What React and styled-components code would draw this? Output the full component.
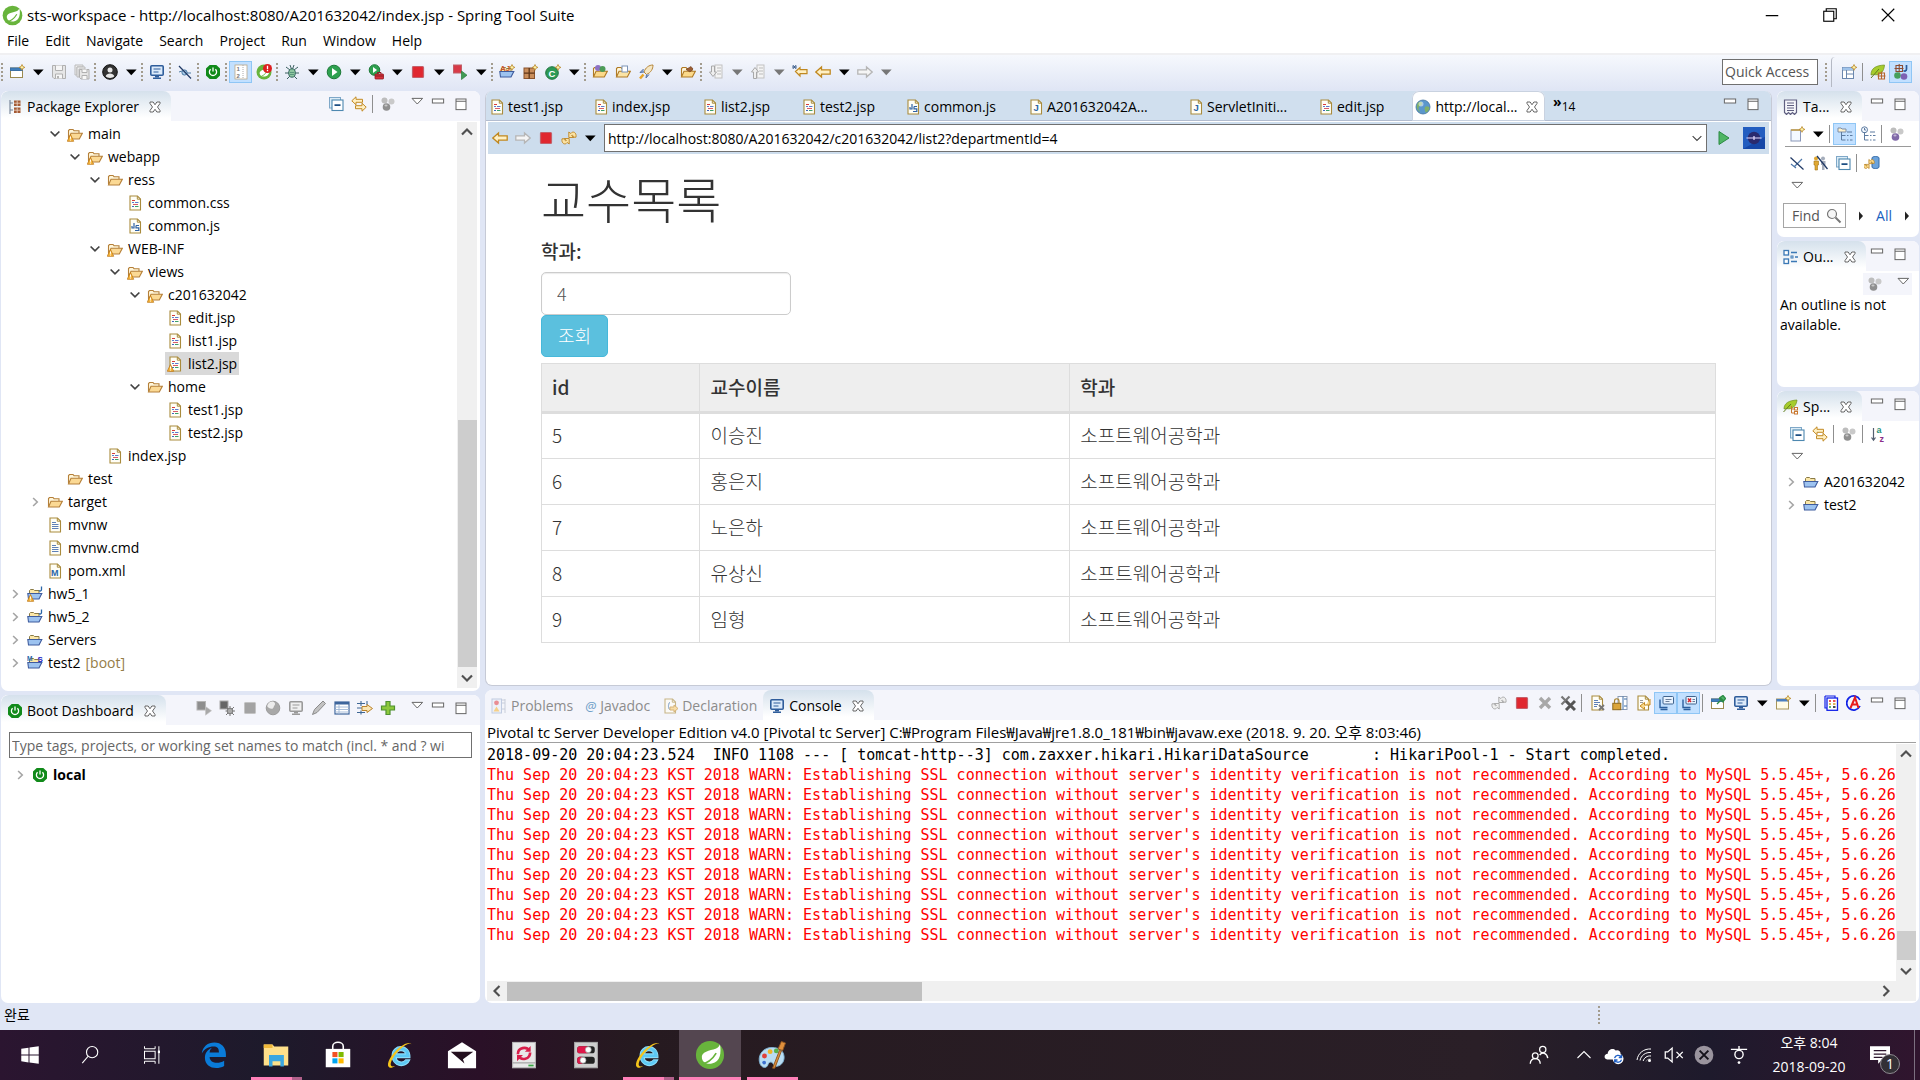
import React from "react";
import styled, { createGlobalStyle, css } from "styled-components";

const uiFont = `"Open Sans", "Noto Sans CJK KR", sans-serif`;
const webFont = `"Noto Sans CJK KR", sans-serif`;
const monoFont = `"DejaVu Sans Mono", "Noto Sans CJK KR", monospace`;

const GlobalStyle = createGlobalStyle`
  * { box-sizing: border-box; }
  body { margin: 0; background: #e0e6f5; font: 14px/20px ${uiFont}; color: #000; overflow: hidden; }
  button, input { font: inherit; color: inherit; margin: 0; padding: 0; border: 0; background: none; border-radius: 0; }
  button { cursor: default; }
  ul { list-style: none; margin: 0; padding: 0; }
  svg { display: block; flex: none; }
`;

/* ---------- drawings ---------- */

const star = <path d="M13 0.5l.9 2 2 .9-2 .9-.9 2-.9-2-2-.9 2-.9z" fill="#fff3a8" stroke="#b8862b" strokeWidth=".8" />;
const doc = (
  <>
    <path d="M3 1h7.5L13.500 4v11H3z" fill="#fffef6" stroke="#a98b3d" strokeWidth="1.1" />
    <path d="M10.300 1v3.200h3" fill="none" stroke="#a98b3d" />
  </>
);
const openFolder = (a, b) => (
  <>
    <path d="M1.500 12.500V4.500l1-1h3.500l1 1.200h5v2.500" fill="#fff6da" stroke={a} strokeWidth="1.100" />
    <path d="M1.500 13L4 7.300h11.300L12.300 13z" fill={b} stroke={a} strokeWidth="1.100" />
  </>
);
const warn = (
  <>
    <path d="M3.500 8.500L6.700 15.300H.3z" fill="#f8b83c" stroke="#c07a1c" strokeWidth=".8" />
    <path d="M3.500 10.500v2.300M3.500 13.600v.9" stroke="#fff" strokeWidth="1" />
  </>
);
const project = (
  <>
    <path d="M2.500 12V4.500l1-1h3l1 1h4.500v3" fill="#fbe7a8" stroke="#8a7b45" />
    <path d="M1.500 13L.8 7.500h14L12 13z" fill="#9dc3f0" stroke="#3f5c9e" strokeWidth="1.100" />
  </>
);
const balls = (c) => (
  <>
    <circle cx="4.500" cy="4.500" r="3" fill="#bdbdbd" />
    <circle cx="11.500" cy="5.500" r="3" fill="#c9c9c9" />
    <circle cx="6.500" cy="11" r="3.800" fill={c} />
    <ellipse cx="6" cy="9.500" rx="1.600" ry="1" fill="#fff" opacity=".5" />
  </>
);
const monitor = (c, f) => (
  <>
    <rect x="1.800" y="1.800" width="12.400" height="9.400" rx="1" fill={f} stroke={c} strokeWidth="1.600" />
    <path d="M4.500 5h7M4.500 8h5" stroke={c} />
    <path d="M6 12.500h4M4 14.300h8" stroke={c} strokeWidth="1.500" />
  </>
);
const power = (
  <>
    <path d="M4.700 1h6.600L15 4.500v7L11.300 15H4.700L1 11.500v-7z" fill="#118a1a" />
    <path d="M5.600 5.200a3.600 3.600 0 1 0 4.800 0M8 3.600v4" fill="none" stroke="#fff" strokeWidth="1.300" />
  </>
);
const leafBall = (
  <>
    <circle cx="8" cy="8" r="7.500" fill="#68b43c" />
    <path d="M13.300 2.300c.8 4.500.3 9.500-4.300 10.200-2.500.4-4.700-.3-5.300-2.700C3 6.300 8 5.600 11 4.700c1.200-.4 1.900-1.300 2.300-2.400z" fill="#fff" />
    <path d="M3 13c3.500-.5 6.500-3 8.300-6" fill="none" stroke="#68b43c" strokeWidth=".9" />
  </>
);
const arrowL = (c, f) => <path d="M.8 8L6.500 3v2.800h8.700v4.400H6.500V13z" fill={f} stroke={c} strokeWidth="1.300" />;
const arrowR = (c, f) => <path d="M15.200 8L9.500 3v2.800H.8v4.400h8.700V13z" fill={f} stroke={c} strokeWidth="1.300" />;
const syncArrows = (c, f) => (
  <>
    <path d="M.8 4.800l4.200-4v2.500h6.500v3H5v2.500z" fill={f} stroke={c} />
    <path d="M15.200 11.200l-4.200-4v2.500H4.500v3H11v2.500z" fill={f} stroke={c} />
  </>
);
const stopRed = <rect x="2.500" y="2.500" width="11" height="11" rx="1" fill="#e0272f" stroke="#c4606a" strokeWidth="1.200" />;
const refresh = (c, f) => (
  <>
    <path d="M7.800 7.500V2l2 1.500C12 .5 15.800 2.500 15 7.200h-2.800c.3-1.600-.6-2.300-1.600-1.700l2 2z" fill={f} stroke={c} strokeWidth=".9" />
    <path d="M8.200 8.500V14l-2-1.500C4 15.500.2 13.500 1 8.800h2.800c-.3 1.600.6 2.300 1.600 1.700l-2-2z" fill={f} stroke={c} strokeWidth=".9" />
  </>
);
const codeDoc = (
  <>
    {doc}
    <path d="M5 5.500h3" stroke="#d63c3c" />
    <path d="M5 7.500h2M8 7.500h3.500" stroke="#5b7bd0" />
    <path d="M6 9.500h5" stroke="#d65c6c" />
    <path d="M5 11.500h2" stroke="#3f66c0" /><path d="M8 11.500h3.500" stroke="#3ba06a" />
  </>
);
const jsDoc = (
  <>
    {doc}
    <path d="M7 5v5H5V8M9 7.500h3M9 7.500v2.300h2.800v2.700H8" fill="none" stroke="#2f62a5" strokeWidth="1.200" />
  </>
);
const collapse = (
  <>
    <rect x="1.500" y="1.500" width="11" height="10.500" fill="#dcecf6" stroke="#7fa8c8" />
    <rect x="4" y="4" width="11" height="10.500" fill="#fff" stroke="#4d88b0" strokeWidth="1.100" />
    <path d="M6.500 9.200h6" stroke="#1c4e82" strokeWidth="1.700" />
  </>
);
const xMark = (c) => <path d="M3 3l10 10M13 3L3 13" stroke={c} strokeWidth="3.400" />;
const letter = (t, x, y, size, fill, extra = {}) => (
  <text x={x} y={y} fontSize={size} fill={fill} fontWeight="700" fontFamily="Liberation Sans, sans-serif" {...extra}>{t}</text>
);
const windowIcon = (
  <>
    <rect x="1.500" y="4" width="12" height="9.500" fill="#fff" stroke="#9b8a50" />
    <rect x="1.500" y="4" width="12" height="2.500" fill="#3f7fbd" stroke="#3c70a5" />
  </>
);
const ie = (
  <>
    <path d="M13.300 9.400H6c.2 2.600 3.600 3 5 1.200h2.200c-1.700 4.700-9.400 4-9.400-2.300C3.800 2 13.500 1.600 13.300 9.400zM6.100 7.400h4.800c-.3-2.300-4.400-2.400-4.800 0z" fill="#5cc9f5" stroke="#8adcf9" strokeWidth=".6" />
    <path d="M14.200 3.200C14.500.2 10 1.500 6 5.500 2 9.600.4 14 2.600 14.800c.8.200 1.800-.2 2.800-.9-1.600.5-2.700.2-2.300-1.600.6-3 5.500-8.800 8.800-10.100 1.600-.6 2.300-.2 2.300 1z" fill="#f6c51b" />
  </>
);
const sash = (
  <>
    <path d="M2 9l5 4M5 12l6-6 2-2" stroke="#4d76a8" fill="none" strokeWidth="1.200" />
    <path d="M1.500 2.500l13 12" stroke="#1f3864" strokeWidth="1.200" />
  </>
);
const treeLines = (
  <path d="M4.500 6v8h4M4.500 9.500h4M10 6h5M10 9.500h1.500M13 9.500h2.500M10 14h1.500M13 14h2.500" fill="none" stroke="#5d7ba0" />
);

const ICONS = {
  spring: leafBall,
  newWizard: <>{windowIcon}{star}</>,
  save: <><path d="M1.500 1.500h13v13H3l-1.500-1.500z" fill="#e6e6e6" stroke="#b0b0b0" /><path d="M4.500 1.500v5h7v-5M4.500 14.500v-4.500h7v4.500" fill="#f6f6f6" stroke="#b0b0b0" /><path d="M6 12h2v2.500H6z" fill="#b5b5b5" /></>,
  saveAll: <><path d="M1 1h8v2H3v8H1z" fill="#eee" stroke="#bbb" /><path d="M3 3h8v2H5v8H3z" fill="#eee" stroke="#bbb" /><path d="M5.500 5.500h9.500v9.500H7l-1.500-1.500z" fill="#e6e6e6" stroke="#b0b0b0" /><path d="M8 5.500v3h5v-3M8 15v-3.500h5V15" fill="#f8f8f8" stroke="#b0b0b0" /></>,
  user: <><circle cx="8" cy="8" r="7.300" fill="#333" stroke="#111" /><circle cx="8" cy="6" r="2.500" fill="#e8e8e8" /><path d="M3.700 12.200c1-3.700 7.600-3.700 8.600 0-2 2.300-6.600 2.300-8.600 0z" fill="#e8e8e8" /></>,
  monitor: monitor("#2f5d9b", "#dceafa"),
  monitorGray: monitor("#9a9a9a", "#f0f0f0"),
  noLink: <><circle cx="7.500" cy="8.500" r="2.600" fill="#a8cbe8" stroke="#4b7ba5" /><path d="M10 9h4M5 7l-3 1" stroke="#4b7ba5" /><path d="M2 2l12 12.500" stroke="#1f3864" strokeWidth="1.200" /></>,
  power,
  ruler: <><rect x="2" y="1" width="12" height="14" fill="#fff" stroke="#b9a98a" strokeWidth=".8" /><path d="M10 1v14" stroke="#aaa" strokeDasharray="1 1" />{letter("1", 3.500, 7, 6, "#777")}{letter("2", 3.500, 13.500, 6, "#777")}</>,
  springBadge: <>{leafBall}<circle cx="11.500" cy="4.500" r="4.500" fill="#dd1f1f" /><path d="M11.500 1.800v3.400M11.500 6v1.200" stroke="#fff" strokeWidth="1.300" /></>,
  bug: <><path d="M2 3l4 3M14 3l-4 3M1 9h4M15 9h-4M3 15l3-3M13 15l-3-3M6 1l1.500 4M10 1L8.500 5" stroke="#3a5f5f" fill="none" /><ellipse cx="8" cy="9" rx="3.300" ry="4.200" fill="#8fc7a0" stroke="#33665f" /><path d="M6 8.500h4M6 10.500h4" stroke="#4c8a74" strokeWidth=".8" /></>,
  run: <><circle cx="8" cy="8" r="6.800" fill="#2ea04f" stroke="#1d7a38" /><path d="M6 4l5.500 4L6 12z" fill="#fff" /></>,
  runExt: <><circle cx="6.500" cy="6" r="5.300" fill="#2ea04f" stroke="#1d7a38" /><path d="M5 3l4 3-4 3z" fill="#fff" /><rect x="7" y="10" width="8.500" height="5" rx=".6" fill="#d6303a" stroke="#8f1c24" strokeWidth=".8" /><path d="M9.500 10V8.500h3.500V10M7 12h8.500" fill="none" stroke="#8f1c24" /></>,
  stop: stopRed,
  stopRun: <><rect x="1.500" y="1" width="8" height="8" fill="#d83a48" stroke="#c06068" /><path d="M9.500 7l5.500 4.200-5.500 4.300z" fill="#3f9c55" stroke="#2b7a3e" strokeWidth=".7" /></>,
  aj: <>{project}{letter("AJ", 1, 7, 8, "#c7562f")}{star}</>,
  pkg: <><rect x="2" y="4" width="10.500" height="10.500" fill="#c98d5b" stroke="#8a532c" /><path d="M7.200 4v10.500M2 9.200h10.500" stroke="#5e3518" strokeWidth="1.300" />{star}</>,
  classNew: <><circle cx="7" cy="9" r="6.300" fill="#2d9a56" stroke="#20743f" />{letter("C", 3.500, 12.500, 9.500, "#fff")}{star}</>,
  folderBalls: <>{openFolder("#b07a25", "#fbd98a")}<circle cx="6" cy="4" r="3" fill="#8d72c5" /><circle cx="10.500" cy="5" r="3" fill="#4c9b58" /></>,
  folderDoc: <>{openFolder("#b07a25", "#fbe3a4")}<rect x="7" y="2" width="5.500" height="6" fill="#fff" stroke="#7c93b6" /></>,
  rocket: <><path d="M15 1C11 1 7.500 3.500 6 8l2.500 2.500C13 8.500 15 5 15 1z" fill="#f4e6c4" stroke="#b5853a" /><path d="M6 8L2 8.500 5.500 5M8.500 10.500L8 14l3-3.500" fill="#8ba4cf" stroke="#5b76a5" /><path d="M5.500 10.500L2 14.500" stroke="#e8a528" strokeWidth="2.500" /></>,
  folderPen: <>{openFolder("#b07a25", "#fbd98a")}<path d="M6 5.500l5-3 2 2.500-3 3z" fill="#9b5d34" stroke="#6e3c1c" strokeWidth=".6" /></>,
  nextAnn: <><rect x="7" y="1" width="7" height="13" fill="#f4f4f4" stroke="#c2c2c2" /><path d="M9 4h4M9 7h4M9 10h4" stroke="#bbb" /><path d="M3.500 2h3v6h2L5 12.500 1.500 8h2z" fill="#efefef" stroke="#a8a8a8" /></>,
  prevAnn: <><rect x="7" y="1" width="7" height="13" fill="#f4f4f4" stroke="#c2c2c2" /><path d="M9 4h4M9 7h4M9 10h4" stroke="#bbb" /><path d="M3.500 14.500h3V8h2L5 3.500 1.500 8h2z" fill="#efefef" stroke="#a8a8a8" /></>,
  lastEdit: <><path d="M3.500 7.500l4.500-4v2.200h7v4H8v2.300z" fill="#fff0c4" stroke="#c08820" strokeWidth="1.200" /><path d="M0 3h5M.8 1l3.400 4M4.200 1L.8 5" stroke="#2b4f80" strokeWidth=".9" /></>,
  back: arrowL("#c08820", "#fff0c4"),
  forward: arrowR("#b5b5b5", "#f5f5f5"),
  perspective: <><rect x="1.500" y="3.500" width="11" height="11" fill="#fff" stroke="#6b87ae" /><path d="M1.500 6h11M5.500 6v8.500M5.500 10h7" stroke="#6b87ae" /><rect x="1.500" y="3.500" width="11" height="2.500" fill="#9fc3ea" />{star}</>,
  springPersp: <><path d="M1 11C1 4 6 1.500 14.500 1 14 8 10 12 3.500 10.500z" fill="#a6cc2c" stroke="#6f8f1f" strokeWidth=".7" /><path d="M1 14L9 5" stroke="#5f7d1a" /><path d="M8.500 9h6v6h-6zM11.500 7.500V15M7.500 12h8" fill="none" stroke="#b5672f" strokeWidth="1.100" /></>,
  javaPersp: <><path d="M3 1.500h6.500v6H3zM6.200 0v8.500M1.500 4.500h9" fill="none" stroke="#8d4d33" strokeWidth="1.100" /><path d="M13.500 1v4c0 2-2 2.500-3 1.500" fill="none" stroke="#2a5c9c" strokeWidth="1.700" /><circle cx="4.500" cy="11.500" r="3.300" fill="#46a05d" /><circle cx="11" cy="12.500" r="3.300" fill="#7d62b3" /></>,
  pkgExplorer: <><path d="M3 1v14M3 4h3M3 11h3" fill="none" stroke="#6f7f92" strokeWidth="1.100" /><rect x="7" y="1.500" width="6.500" height="5.500" fill="#a35a35" /><rect x="7" y="8.500" width="6.500" height="5.500" fill="#a35a35" /><path d="M10.200 1.500V7M7 4.200h6.500M10.200 8.500V14M7 11.200h6.500" stroke="#f0d9c9" strokeWidth=".8" /></>,
  collapse,
  link: syncArrows("#c28a25", "#fff0c4"),
  balls: balls("#8f8f8f"),
  ballsPurple: balls("#8069a8"),
  folder: openFolder("#b5803a", "#fbd994"),
  folderWarn: <>{openFolder("#b5803a", "#fbd994")}{warn}</>,
  jsp: codeDoc,
  jspWarn: <>{codeDoc}{warn}</>,
  js: jsDoc,
  java: <>{doc}{letter("J", 5.500, 12, 9.500, "#2a66a8")}</>,
  text: <>{doc}<path d="M5 5.500h4M5 7.500h6.500M5 9.500h6.500M5 11.500h6.500" stroke="#5e80b8" /></>,
  maven: <>{doc}{letter("M", 4, 13, 9, "#2a66a8")}</>,
  projJWarn: <>{project}<path d="M14.500.5v3c0 1.500-1.500 2-2.500 1" fill="none" stroke="#2a66a8" strokeWidth="1.300" />{warn}</>,
  projJ: <>{project}<path d="M14.500.5v3c0 1.500-1.500 2-2.500 1" fill="none" stroke="#2a66a8" strokeWidth="1.300" /></>,
  proj: project,
  projMS: <>{project}{letter("M", 0, 5.500, 6.500, "#2a66a8")}{letter("S", 10.500, 6.500, 8, "#2222c4")}</>,
  startGray: <><rect x="1" y="1.500" width="8.500" height="8.500" fill="#8e8e8e" stroke="#b5b5b5" /><path d="M9.500 6.500l6 4.200-6 4.500z" fill="#a8a8a8" stroke="#c5c5c5" strokeWidth=".6" /></>,
  debugGray: <><rect x="1" y="1" width="8" height="8" fill="#666" stroke="#aaa" /><circle cx="11" cy="11" r="2.800" fill="#aaa" stroke="#777" /><path d="M7 7l2 2M15 7l-2 2M7 15l2-2M15 15l-2-2M11 6v2M6.500 11h1.500M14 11h2M11 14v2" stroke="#777" /></>,
  stopGray: <rect x="2.500" y="2.500" width="11" height="11" rx=".8" fill="#a3a3a3" stroke="#c3c3c3" />,
  globeGray: <><circle cx="8" cy="8" r="6.800" fill="#a8a8a8" stroke="#9b9b9b" /><path d="M2.500 5C4 1.500 8 .8 9.500 2.500c1.500 2-.5 3-1 5-.5 1.800-3 1.500-4.500.5S2 6.500 2.500 5z" fill="#ececec" /></>,
  pencil: <path d="M1.500 14.500l2-5L12 1l2.500 2.500-8.500 9z" fill="#c2c2c2" stroke="#8a8a8a" />,
  props: <><rect x="1" y="2" width="14" height="12" fill="#fff" stroke="#3d659c" strokeWidth="1.200" /><path d="M1 3.300h14" stroke="#3d659c" strokeWidth="2.500" /><path d="M5 4v10M1 7h14M1 9.500h14M1 12h14" stroke="#9fb7d6" strokeWidth=".9" /></>,
  filter: <><path d="M0 3.500h8M0 8h5M0 12.500h8M4 1v5M10 1v4M4 10.500v4" stroke="#3e6795" strokeWidth="1.100" /><path d="M5 6.500h5v-2l5.500 4-5.500 4v-2H5z" fill="#fbe6b4" stroke="#b9822a" /></>,
  plus: <path d="M6 1.500h4V6h4.500v4H10v4.500H6V10H1.500V6H6z" fill="#8cc83c" stroke="#4f9130" strokeWidth="1.200" />,
  problems: <g opacity=".6"><rect x="1" y="1" width="9.500" height="14" fill="#e8eef8" stroke="#9db0d0" /><circle cx="5.500" cy="4.800" r="2.400" fill="#e2484f" /><path d="M5.500 8.500l3 5h-6z" fill="#f6b73c" /><path d="M11 2h3M11 5h3M11 11h3M14 1v14" stroke="#aab4c6" /></g>,
  declaration: <g opacity=".6">{doc}<path d="M8 4.500c-2 0-.5 3-2 3.500 1.500.5 0 3.500 2 3.500" fill="none" stroke="#3468a5" /><path d="M8 9h4V7l4 3.500L12 14v-2H8z" fill="#f8cc70" stroke="#c28a25" /></g>,
  xGray: xMark("#a8a8a8"),
  xxGray: <><path d="M1.500 1.500l8 8M9.500 1.500l-8 8" stroke="#777" strokeWidth="2.200" /><path d="M6 6l9 9M15 6l-9 9" stroke="#555" strokeWidth="3" /></>,
  clearDoc: <>{doc}<path d="M5 5.500h4M5 7.500h6M5 9.500h4M5 11.500h3" stroke="#5e80b8" /><path d="M10 10l5 5M15 10l-5 5" stroke="#777" strokeWidth="1.800" /></>,
  lock: <><rect x="6" y="1.500" width="9" height="13" fill="#fff" stroke="#8a9bb4" /><path d="M11 1.500v13M12 4h3M12 11h3" stroke="#3f6fa8" /><path d="M2.500 8.500V6c0-3 4.500-3 4.500 0v2.500" fill="none" stroke="#a88430" strokeWidth="1.200" /><rect x=".8" y="8.300" width="8" height="6.400" fill="#dba53a" stroke="#8f6a1d" /></>,
  wrap: <>{doc}<path d="M5 5.500h3M5 7.500h3" stroke="#999" /><path d="M15 4v6H9.500V7.500L5 11l4.500 3.500V12" fill="#f9d989" stroke="#c28a25" /></>,
  showOut: <><rect x="5" y="1.500" width="10.500" height="7.500" rx="1" fill="#eaf4ff" stroke="#41658f" /><path d="M7.500 4.500h6M7.500 6.500h4" stroke="#6b7f9a" /><path d="M2 4.500v8h7.500M2.500 14.500h7" fill="none" stroke="#2b5f9e" strokeWidth="1.400" /></>,
  showErr: <><rect x="5" y="1.500" width="10.500" height="7.500" rx="1" fill="#eaf4ff" stroke="#41658f" /><path d="M7 3.500l3 3.500M10 3.500L7 7" stroke="#d8202a" strokeWidth="1.500" /><path d="M11.500 4.500h2.500M11.500 6.500h2.500" stroke="#6b7f9a" /><path d="M2 4.500v8h7.500M2.500 14.500h7" fill="none" stroke="#2b5f9e" strokeWidth="1.400" /></>,
  pin: <>{windowIcon}<path d="M7 9l4-4M9 3l4.500 4.500M10 2.500l3-2 2.500 3-2 2.500z" stroke="#2c8b45" fill="#4fb468" strokeWidth="1.300" /></>,
  newConsole: <><rect x="1.500" y="4" width="12" height="10" fill="#fffbe6" stroke="#a8965a" /><rect x="1.500" y="4" width="12" height="2.500" fill="#4a7fc0" />{star}</>,
  grid: <><path d="M2 1h10v2M4 13H2V1" fill="none" stroke="#1020e8" strokeWidth="1.200" /><rect x="4" y="3" width="10.500" height="12.300" fill="#fff" stroke="#1020e8" strokeWidth="1.300" /><path d="M6 6h2M10 6h2.500" stroke="#e02020" strokeWidth="1.300" /><path d="M6 9h2M10 9h2.500" stroke="#d8a020" strokeWidth="1.300" /><path d="M6 12h2" stroke="#20a040" strokeWidth="1.300" /><path d="M10 12h2.500" stroke="#111" strokeWidth="1.300" /></>,
  anyEdit: <><path d="M14 5A7 7 0 1 0 14 11" fill="none" stroke="#1224e6" strokeWidth="1.700" /><path d="M4.500 13L9 2.500 12.500 13M6 9.500h6" fill="none" stroke="#e81c1c" strokeWidth="2" /></>,
  refreshGold: refresh("#bd8422", "#fbe3a4"),
  refreshGray: refresh("#a5a5a5", "#eee"),
  play: <path d="M3 1.500l10 6.500L3 14.500z" fill="#4fb565" stroke="#2b8a42" />,
  browser: <><circle cx="8" cy="8" r="7" fill="#5b97cc" stroke="#41729f" strokeWidth=".8" /><path d="M3 3.500c3-2 5 0 4 2s-3 1-3.500 3.500c-.3 1.500 1.500 2.500 1.500 4C1.500 11 1 6.500 3 3.500zM10 8c2-1.500 4-.5 4.500 1-.5 2.500-2.500 4.500-4 4.500-.5-2-1.500-4-.5-5.500z" fill="#7fb069" /><circle cx="6" cy="5" r="2.500" fill="#fff" opacity=".5" /></>,
  tasks: <><path d="M1.500 1h12v12.500l-2 2-2-2-2 2-2-2-2 2-2-2z" fill="#f5f6fa" stroke="#5f5f80" strokeWidth="1.200" /><path d="M4 4h7M4 6.500h7M4 9h7M4 11.500h7" stroke="#5f5f80" /></>,
  newTask: <><rect x="2" y="4" width="9.500" height="11" fill="#f4f9ff" stroke="#8a97b8" /><path d="M2 4h9.500" stroke="#c29a40" strokeWidth="1.300" />{star}</>,
  categorized: <><path d="M1 2h3l1 1h4v3H1z" fill="#fff2cc" stroke="#7e8da5" />{treeLines}</>,
  scheduled: <><circle cx="4.500" cy="3.800" r="3" fill="#f4f9ff" stroke="#5d7ba0" /><path d="M4.500 2v2h1.500" stroke="#5d7ba0" fill="none" />{treeLines}</>,
  unsub: sash,
  people: <><circle cx="4" cy="3.500" r="2" fill="#e0a832" /><path d="M2 6h4.500v4H5.500v5H3v-5H2z" fill="#e0a832" stroke="#a57618" strokeWidth=".6" /><circle cx="11" cy="3.500" r="2" fill="#a5adbb" /><path d="M9 6h4.500v4h-1v5H10v-5H9z" fill="#a5adbb" /><path d="M5 1l10.500 13" stroke="#1f3864" strokeWidth="1.300" /></>,
  syncRepo: <><path d="M8 3c0-2 7-2 7 0v9c0 2-7 2-7 0z" fill="#6ba3dc" stroke="#346ba8" /><g transform="translate(-1 3) scale(.75)">{refresh("#b07a1c", "#fbd98a")}</g></>,
  outline: <><rect x="1" y="1.500" width="4.500" height="4.500" fill="#fff" stroke="#3a78b5" strokeWidth="1.300" /><rect x="1" y="10" width="4.500" height="4.500" fill="#fff" stroke="#3a78b5" strokeWidth="1.300" /><path d="M8 3.500h6M12 8h3M8 12.500h6" stroke="#3a78b5" strokeWidth="1.300" /><rect x="8" y="7" width="2" height="2" fill="#fff" stroke="#3a78b5" /></>,
  springExplorer: <><path d="M1 10C1 4 6 1.500 14 1 13.500 7 9 11 3.500 9.500z" fill="#a6cc2c" stroke="#6f8f1f" strokeWidth=".7" /><path d="M.5 13L8 5" stroke="#5f7d1a" /><path d="M8.500 7v7h3M8.500 10h3" fill="none" stroke="#c8772f" /><rect x="11.500" y="8.500" width="3" height="2.500" fill="#fff" stroke="#c8772f" /><rect x="11.500" y="12.500" width="3" height="2.500" fill="#fff" stroke="#c8772f" /></>,
  sortAz: <><path d="M3.500 2v12M1.500 11.500l2 2.700 2-2.700" fill="none" stroke="#555f70" strokeWidth="1.200" />{letter("a", 6.500, 7, 9, "#2a8f7a")}{letter("z", 9.500, 15.500, 9, "#8b2f8b")}</>,
  search: <><circle cx="6" cy="6" r="4.500" fill="#f6f6f6" stroke="#777" strokeWidth="1.200" /><path d="M9.500 9.500l5 5" stroke="#777" strokeWidth="2" /></>,
  triangle: <path d="M4 3.500h8.500L8.200 8z" fill="#fff" stroke="#666" strokeWidth=".8" />,
  minimize: <rect x="3.500" y="4" width="9" height="3.200" fill="#fff" stroke="#666" strokeWidth=".8" />,
  maximize: <><rect x="4" y="4" width="8" height="8.500" fill="#fff" stroke="#666" strokeWidth=".8" /><path d="M4 5.800h8" stroke="#666" strokeWidth=".8" /></>,
  close: <path d="M4 4h2.500L8 6.200 9.500 4H12v1.200L10 8l2 2.800V12H9.500L8 9.800 6.500 12H4v-1.200L6 8 4 5.200z" fill="#fff" stroke="#666" strokeWidth=".8" />,
  down: <path d="M4 6h8.500L8.200 10.500z" fill="#000" />,
  downGray: <path d="M4 6h8.500L8.200 10.500z" fill="#777" />,
  playBlack: <path d="M6 3.500l4 4.500-4 4.500z" fill="#222" />,
  chevDown: <path d="M4.500 6L8 9.500 11.500 6" fill="none" stroke="#444" strokeWidth="1.400" />,
  chevRight: <path d="M6.500 4.800L9.800 8l-3.300 3.200" fill="none" stroke="#a5a5a5" strokeWidth="1.300" />,
  thinDown: <path d="M4.500 6.500L8 10l3.500-3.500" fill="none" stroke="#444" strokeWidth=".9" />,
  arrUp: <path d="M4 10l4-4 4 4" fill="none" stroke="#505050" strokeWidth="1.700" />,
  arrDown: <path d="M4 6l4 4 4-4" fill="none" stroke="#505050" strokeWidth="1.700" />,
  arrLeft: <path d="M10 4L6 8l4 4" fill="none" stroke="#505050" strokeWidth="1.700" />,
  arrRight: <path d="M6 4l4 4-4 4" fill="none" stroke="#505050" strokeWidth="1.700" />,
  winMin: <path d="M3 8.500h10" stroke="#000" strokeWidth="1" />,
  winRestore: <><rect x="3" y="5" width="8" height="8" fill="none" stroke="#000" strokeWidth=".9" /><path d="M5 5V3h8v8h-2" fill="none" stroke="#000" strokeWidth=".9" /></>,
  winClose: <path d="M3 3l10 10M13 3L3 13" stroke="#000" strokeWidth=".9" />,
  eclipse: <><rect width="16" height="16" fill="#1647a8" /><path d="M0 0h16v7L0 16z" fill="#2f74d8" opacity=".5" /><circle cx="8" cy="8" r="4.500" fill="#2a2a6e" /><path d="M2.500 8h11M8 6.500v3" stroke="#e6dcff" strokeWidth=".9" /></>,
  windows: <path d="M1 3l5.800-.9v5.400H1zM7.600 2L15 .9v6.600H7.600zM1 8.400h5.800v5.500L1 13zM7.600 8.400H15V15l-7.400-1.100z" fill="#fff" />,
  magnifier: <><circle cx="9.700" cy="5.700" r="4.500" fill="none" stroke="#fff" strokeWidth=".9" /><path d="M6.500 9L1.800 14.500" stroke="#fff" strokeWidth=".9" /></>,
  taskView: <><rect x="2" y="5" width="8.500" height="6" fill="none" stroke="#fff" strokeWidth=".8" /><path d="M2 1v2h8.500V1M2 15v-2h8.500v2M13.500 1v14" fill="none" stroke="#fff" strokeWidth=".8" /><rect x="12.700" y="4.500" width="1.700" height="2" fill="#fff" /></>,
  edge: <path d="M1 7.200C1.600 3 4.500.8 8.200.8c4 0 6.600 2.800 6.600 6.600v1.700H5.500c.1 3.700 5 4.200 8.300 2.200v3c-4.400 2.400-11 1.200-11-4.700 0-2.800 1.500-4.800 4-5.800C5.800 4.700 5.600 5.600 5.500 6.500h5.300c.1-2.300-1-3.400-3-3.400C5 3.100 2.400 4.500 1 7.200z" fill="#0a7bd8" />,
  explorer: <><path d="M1 2h5l1 1.200h8V14H1z" fill="#ffe08a" /><path d="M1 2h5v2H1z" fill="#f0b93a" /><path d="M4 8h8.500v6.500H10.500v-3H6v3H4z" fill="#3ba6e0" /></>,
  store: <><path d="M5 5V3c0-3 6-3 6 0v2" fill="none" stroke="#fff" strokeWidth=".9" /><path d="M1 4.500h14V15H1z" fill="#fff" /><path d="M4.800 6.300h2.900v2.900H4.800z" fill="#f25022" /><path d="M8.300 6.300h2.900v2.900H8.300z" fill="#7fba00" /><path d="M4.800 9.900h2.900v2.900H4.800z" fill="#00a4ef" /><path d="M8.300 9.900h2.900v2.900H8.300z" fill="#ffb900" /></>,
  ie,
  mail: <><path d="M.5 6L8 1.200 15.500 6v9H.5z" fill="#fff" /><path d="M2 6.300h12l-5.500 4 .8 2.200z" fill="#24101f" /></>,
  driveSync: <><rect x="1.500" y=".8" width="13" height="14.500" fill="#e8e8e8" stroke="#bbb" strokeWidth=".6" /><path d="M4.500 7.500c0-4 5-4.500 6.500-2M11.500 6.500c0 4-5 5-6.800 2" fill="none" stroke="#d81e4a" strokeWidth="1.500" /><path d="M11.800 2.800v3.400H8.500zM4 11.500V8h3.400z" fill="#d81e4a" /><path d="M1.500 12.500h13" stroke="#999" strokeWidth=".6" /><path d="M10.500 14h3" stroke="#39a845" /></>,
  switches: <><rect x="1.500" y=".8" width="13" height="14.500" fill="#cfcfcf" stroke="#aaa" strokeWidth=".6" /><rect x="3" y="3" width="10" height="4" rx="1.500" fill="#222" /><path d="M4.500 3H9v4H4.500A1.500 1.500 0 0 1 3 5.500v-1A1.500 1.500 0 0 1 4.500 3z" fill="#e0184a" /><circle cx="9.300" cy="5" r="1.700" fill="#fff" stroke="#999" strokeWidth=".4" /><rect x="3" y="9" width="10" height="4" rx="1.500" fill="#222" /><path d="M4.500 9H6v4H4.500A1.500 1.500 0 0 1 3 11.500v-1A1.500 1.500 0 0 1 4.500 9z" fill="#e0184a" /><circle cx="6.300" cy="11" r="1.700" fill="#fff" stroke="#999" strokeWidth=".4" /></>,
  paint: <><path d="M8 4C3.500 4 .8 7.500 1.200 11c.3 2.800 2 4 3.500 3.500 1.600-.5.800-2.500 2.400-2.700 1.800-.2 1.500 2.700 3.700 2.200 2.500-.5 4-3 3.600-5.500C14 5.500 11.500 4 8 4z" fill="#b9dcf2" stroke="#7fb1d2" strokeWidth=".5" /><circle cx="4" cy="8.500" r="1.300" fill="#e0403a" /><circle cx="7" cy="6.200" r="1.300" fill="#f0b429" /><circle cx="10.300" cy="5.800" r="1.300" fill="#57b04b" /><circle cx="3.800" cy="12" r="1" fill="#3b6fd0" /><path d="M13 .8l2.200.8-1.500 4-2.500-.8zM12 5.500l1 .4L9.500 15H8.300z" fill="#e0903c" stroke="#8d5420" strokeWidth=".5" /></>,
  peopleTray: <><circle cx="11" cy="3.500" r="2.500" fill="none" stroke="#fff" /><circle cx="5" cy="8.500" r="2.300" fill="none" stroke="#fff" /><path d="M1 15c.3-5.500 7.700-5.500 8 0M8.500 8c2-2.800 6-1.500 6.500 2.500" fill="none" stroke="#fff" strokeWidth="1.100" /></>,
  chevUpTray: <path d="M1.500 11L8 4.500l6.500 6.500" fill="none" stroke="#fff" strokeWidth="1.100" />,
  cloudTray: <><path d="M2.500 11.500C-.5 11 0 7 3 7c0-4 5-5 6.500-2.500C12 3.500 14 6 13 8c2 1 1.500 3.500-.5 3.500z" fill="#fff" /><circle cx="11.300" cy="11" r="4.300" fill="#fff" /><path d="M8.500 10.500c.5-2.500 4-3 5.200-.8M14 11.700c-.6 2.400-3.900 2.800-5.100.7M14 7.800v2.200h-2.200M8.600 14.200V12h2.200" fill="none" stroke="#1f5fc4" strokeWidth="1.100" /></>,
  wifiTray: <><path d="M1 13C2 6 8 1.500 15 2M4 13.500C5 8.500 9.500 5 15 5.500M7.200 14c.8-3.200 4-5.500 7.800-5" fill="none" stroke="#fff" strokeWidth="1" /><path d="M10 14.500c.8-1.700 2.500-3 5-2.500" fill="none" stroke="#888" strokeWidth=".9" /><circle cx="13.500" cy="13.500" r="1.500" fill="#fff" /></>,
  speakerTray: <><path d="M1 5.500h2L6.500 2.500v11L3 10.500H1z" fill="none" stroke="#fff" /><path d="M10 5.500l5 5M15 5.500l-5 5" stroke="#fff" strokeWidth="1.100" /></>,
  xTray: <><circle cx="8" cy="8" r="7.500" fill="#9a949e" /><path d="M4.500 4.500l7 7M11.500 4.500l-7 7" stroke="#15121a" strokeWidth="1.600" /></>,
  ime: <><circle cx="8" cy="7.600" r="3.300" fill="none" stroke="#fff" strokeWidth="1.100" /><path d="M1.500 3.500h13M8 .8v2.700" stroke="#fff" strokeWidth="1.100" /><circle cx="8" cy="14" r="1.100" fill="#fff" /></>,
  notify: <path d="M0 1h16v11H9.500L6.500 15v-3H0zM3 4v1h10V4zm0 2.700v1h10v-1zM3 9.300v1h7v-1z" fill="#fff" fillRule="evenodd" />,
};

/* control glyphs and desktop glyphs are drawn larger than the 16px tool icons */
const LARGE = new Set([
  "triangle", "minimize", "maximize", "close", "down", "downGray", "chevDown", "chevRight", "thinDown",
  "arrUp", "arrDown", "arrLeft", "arrRight", "winMin", "winRestore", "winClose", "windows",
  "peopleTray", "cloudTray", "speakerTray", "xTray", "ime", "notify",
]);
const Icon = ({ name, size = LARGE.has(name) ? 20 : 16 }) => (
  <svg width={size} height={size} viewBox="0 0 16 16" aria-hidden="true">{ICONS[name]}</svg>
);

/* ---------- shared controls ---------- */

const IconBtn = styled.button`
  display: flex;
  align-items: center;
  justify-content: center;
  flex: none;
  width: 23px;
  height: 22px;
  ${(p) => p.$on && css`background: #c2e0ff; box-shadow: inset 0 0 0 1px #8fc6f5;`}
`;
const DropBtn = styled(IconBtn)`width: 19px;`;
const MenuBtn = styled(IconBtn)`width: 18px; margin-left: ${(p) => (p.$apart ? 9 : 0)}px;`;
const Rule = styled.span`
  flex: none;
  width: 1px;
  height: 18px;
  margin: 0 3px 0 2px;
  background: #8f8f8f;
`;
const Grip = styled.span`
  flex: none;
  width: 2px;
  height: 18px;
  margin: 0 2px 0 1px;
  background: repeating-linear-gradient(#a39c8e 0 2px, transparent 2px 4px);
`;

/* "|" grip, "/" rule, "v" drop-down, "v-" disabled drop-down, "*x" pressed */
const Tools = ({ items }) =>
  items.map((it, i) => {
    if (it === "|") return <Grip key={i} />;
    if (it === "/") return <Rule key={i} />;
    if (it === "v") return <DropBtn key={i} aria-label="Open menu"><Icon name="down" /></DropBtn>;
    if (it === "v-") return <DropBtn key={i} aria-label="Open menu" disabled><Icon name="downGray" /></DropBtn>;
    const on = it[0] === "*";
    const name = on ? it.slice(1) : it;
    return <IconBtn key={i} $on={on} aria-label={name}><Icon name={name} /></IconBtn>;
  });

/* ---------- window frame ---------- */

const Window = styled.div`
  display: flex;
  flex-direction: column;
  height: 100vh;
`;
const TitleBar = styled.header`
  display: flex;
  align-items: center;
  height: 30px;
  padding: 0 3px 0 2px;
  background: #fff;
`;
const Caption = styled.div`flex: 1; padding-left: 4px; font-size: 15px; line-height: 20px;`;
const WinBtn = styled.button`
  display: flex;
  align-items: center;
  justify-content: center;
  width: 58px;
  height: 30px;
`;
const MenuBar = styled.nav`
  display: flex;
  gap: 16px;
  height: 23px;
  padding: 0 7px;
  background: #fff;
`;
const MenuItem = styled.button`height: 22px; line-height: 22px;`;
const ToolBar = styled.div`
  display: flex;
  align-items: center;
  height: 37px;
  padding-bottom: 2px;
  border-top: 2px solid #f0f0f2;
  background: linear-gradient(#f6f8fd, #e0e6f5);
`;
const Spacer = styled.div`flex: 1;`;
const QuickAccess = styled.input`
  width: 96px;
  height: 26px;
  margin-right: 6px;
  padding: 0 2px;
  border: 1px solid #707070;
  background: #fff;
  &::placeholder { color: #555; opacity: 1; }
`;
const Perspectives = styled.div`
  display: flex;
  align-items: center;
  margin: 0 8px 0 2px;
  padding: 4px 0 4px 5px;
  border-left: 1px solid #b5b9c4;
  border-radius: 4px 0 0 0;
`;
const mainTools = ["|", "newWizard", "v", "save", "saveAll", "|", "user", "v", "|", "monitor", "|", "noLink", "|", "power", "|", "*ruler", "springBadge", "|", "bug", "v", "run", "v", "runExt", "v", "stop", "v", "stopRun", "v", "|", "aj", "pkg", "classNew", "v", "|", "folderBalls", "folderDoc", "rocket", "v", "folderPen", "|", "nextAnn", "v-", "prevAnn", "v-", "lastEdit", "back", "v", "forward", "v-"];

const Workbench = styled.main`
  display: flex;
  flex: 1;
  gap: 5px;
  min-height: 0;
  padding: 1px 1px 0;
`;
const Column = styled.div`
  display: flex;
  flex-direction: column;
  gap: 4px;
  min-width: 0;
  min-height: 0;
  ${(p) => (p.$width ? `flex: none; width: ${p.$width}px;` : "flex: 1;")}
`;
const UpperRow = styled.div`
  display: flex;
  flex: 1;
  gap: 5px;
  min-height: 0;
`;

/* ---------- view stack ---------- */

const Panel = styled.section`
  display: flex;
  flex-direction: column;
  min-height: 0;
  min-width: 0;
  overflow: hidden;
  border-radius: 7px;
  background: #fff;
  ${(p) => (p.$height ? `flex: none; height: ${p.$height}px;` : "flex: 1;")}
`;
const PanelHead = styled.div`
  display: flex;
  flex: none;
  height: 30px;
  padding-right: 8px;
  background: #f4f5fb;
`;
const HeadTools = styled.div`
  display: flex;
  align-items: center;
  height: 26px;
  margin-left: auto;
`;
const Tab = styled.button`
  display: flex;
  align-items: center;
  gap: 4px;
  height: 30px;
  padding: 2px 6px 0;
  white-space: nowrap;
  color: ${(p) => (p.$active ? "#000" : "#8c8c8c")};
  ${(p) => p.$active && css`
    border-radius: 8px 8px 0 0;
    background: linear-gradient(#d5e1ec, #fff 90%);
  `}
`;
const TabClose = styled.span`padding-left: 2px;`;
const AtSign = styled.span`color: #6f9fc8; font-size: 13px; font-style: italic;`;

const ViewTab = ({ icon, children, active = true, close = true }) => (
  <Tab $active={active}>
    {icon && <Icon name={icon} />}
    {children}
    {close && <TabClose><Icon name="close" /></TabClose>}
  </Tab>
);
const ViewButtons = ({ menu, apart }) => (
  <>
    {menu && <MenuBtn $apart={apart} aria-label="View menu"><Icon name="triangle" /></MenuBtn>}
    <IconBtn aria-label="Minimize"><Icon name="minimize" /></IconBtn>
    <IconBtn aria-label="Maximize"><Icon name="maximize" /></IconBtn>
  </>
);

/* ---------- scroll bars ---------- */

const VTrack = styled.div`
  display: flex;
  flex-direction: column;
  align-items: center;
  justify-content: space-between;
  flex: none;
  width: 20px;
  background: #f0f0f0;
`;
const VThumb = styled.div`
  width: 19px;
  height: ${(p) => p.$size}px;
  margin: auto 0 1px;
  background: #cdcdcd;
`;
const HTrack = styled.div`
  display: flex;
  align-items: center;
  flex: none;
  height: 20px;
  margin: 0 3px 2px 2px;
  padding-right: 20px;
  background: #f0f0f0;
`;
const HThumb = styled.div`
  width: 415px;
  height: 19px;
  margin-right: auto;
  background: #c0c0c0;
`;

/* ---------- tree ---------- */

const PanelBody = styled.div`
  display: flex;
  flex: 1;
  min-height: 0;
  padding: 1px 3px 3px 0;
`;
const Tree = styled.ul`flex: 1; min-width: 0;`;
const Row = styled.li`
  display: flex;
  align-items: center;
  height: 23px;
  padding-left: ${(p) => p.$depth * 20 + 4}px;
  white-space: nowrap;
`;
const Twisty = styled.span`width: 20px; height: 20px;`;
const Item = styled.span`
  display: flex;
  align-items: center;
  gap: 5px;
  height: 23px;
  padding: 0 2px;
  background: ${(p) => (p.$selected ? "#d9d9d9" : "transparent")};
  font-weight: ${(p) => (p.$bold ? 700 : 400)};
`;
const Note = styled.span`color: #957d47;`;

const files = [
  [2, "d", "folderWarn", "main"],
  [3, "d", "folderWarn", "webapp"],
  [4, "d", "folder", "ress"],
  [5, "", "jsp", "common.css"],
  [5, "", "js", "common.js"],
  [4, "d", "folderWarn", "WEB-INF"],
  [5, "d", "folderWarn", "views"],
  [6, "d", "folderWarn", "c201632042"],
  [7, "", "jsp", "edit.jsp"],
  [7, "", "jsp", "list1.jsp"],
  [7, "", "jspWarn", "list2.jsp", "sel"],
  [6, "d", "folder", "home"],
  [7, "", "jsp", "test1.jsp"],
  [7, "", "jsp", "test2.jsp"],
  [4, "", "jsp", "index.jsp"],
  [2, "", "folder", "test"],
  [1, "r", "folder", "target"],
  [1, "", "text", "mvnw"],
  [1, "", "text", "mvnw.cmd"],
  [1, "", "maven", "pom.xml"],
  [0, "r", "projJWarn", "hw5_1"],
  [0, "r", "projJ", "hw5_2"],
  [0, "r", "proj", "Servers"],
  [0, "r", "projMS", "test2", "boot"],
];
const TreeRow = ({ depth, state, icon, label, flag }) => (
  <Row $depth={depth}>
    <Twisty>{state && <Icon name={state === "d" ? "chevDown" : "chevRight"} />}</Twisty>
    <Item $selected={flag === "sel"} $bold={flag === "bold"}>
      <Icon name={icon} />
      {label}
      {flag === "boot" && <Note>[boot]</Note>}
    </Item>
  </Row>
);

/* ---------- boot dashboard ---------- */

const BootBody = styled.div`
  display: flex;
  flex-direction: column;
  gap: 5px;
  padding: 7px 8px 0 5px;
`;
const FilterBox = styled.div`padding-left: 3px;`;
const FilterInput = styled.input`
  width: 100%;
  height: 26px;
  padding: 0 2px;
  border: 1px solid #707070;
  &::placeholder { color: #666; opacity: 1; }
`;

/* ---------- editor ---------- */

const EditorPanel = styled(Panel)`border: 1px solid #c6cad6; border-top: 0;`;
const EditorTabs = styled.div`
  display: flex;
  flex: none;
  height: 30px;
  padding-right: 7px;
  border-bottom: 1px solid #b3bdd0;
  background: #d0dfee;
`;
const EditorTab = styled.button`
  display: flex;
  align-items: center;
  gap: 3px;
  flex: none;
  width: ${(p) => p.$width}px;
  height: ${(p) => (p.$active ? 30 : 29)}px;
  padding: 2px 0 0 3px;
  white-space: nowrap;
  ${(p) => p.$active && css`border-radius: 7px 7px 0 0; background: #fff; box-shadow: inset 0 0 0 1px #c9d2e0; padding-right: 3px; justify-content: space-between;`}
`;
const MoreTabs = styled.button`padding: 0 8px; line-height: 18px; height: 26px; font-weight: 700;`;
const MoreCount = styled.sub`font-size: 12px; font-weight: 400;`;
const BrowserBar = styled.div`
  display: flex;
  align-items: center;
  flex: none;
  height: 32px;
  margin: 1px 2px 0;
  padding-right: 4px;
  background: #cddded;
`;
const UrlBox = styled.div`
  display: flex;
  align-items: center;
  flex: 1;
  height: 28px;
  margin: 0 5px 0 5px;
  border: 1px solid #707070;
  background: #fff;
`;
const UrlInput = styled.input`flex: 1; min-width: 0; height: 24px; padding-left: 3px; outline: 0;`;
const RunBtn = styled(IconBtn)`margin-right: 8px;`;
const editorTabs = [
  ["jsp", "test1.jsp", 104], ["jsp", "index.jsp", 109], ["jsp", "list2.jsp", 99], ["jsp", "test2.jsp", 104],
  ["js", "common.js", 123], ["java", "A201632042A...", 160], ["java", "ServletIniti...", 130], ["jsp", "edit.jsp", 97],
];

const WebPage = styled.div`
  flex: 1;
  min-height: 0;
  padding: 19px 55px 0;
  font: 19px/26px ${webFont};
  color: #333;
`;
const Heading = styled.h1`margin: 0 0 15px; font-size: 49px; line-height: 50px; font-weight: 300;`;
const Form = styled.form`display: flex; flex-direction: column; align-items: flex-start;`;
const Label = styled.label`margin-bottom: 8px; font-size: 19px; font-weight: 500;`;
const TextBox = styled.input`
  width: 250px;
  height: 43px;
  padding: 0 15px 2px;
  border: 1px solid #ccc;
  border-radius: 5px;
  box-shadow: inset 0 1px 1px rgba(0, 0, 0, 0.08);
  color: #555;
  font-size: 18px;
  font-weight: 300;
`;
const Submit = styled.button`
  width: 67px;
  height: 42px;
  padding-bottom: 2px;
  border: 1px solid #46b8da;
  border-radius: 5px;
  background: #5bc0de;
  color: #fff;
  font-size: 18px;
  font-weight: 300;
`;
const Table = styled.table`
  width: 100%;
  margin-top: 6px;
  border-collapse: collapse;
  table-layout: fixed;
  th, td { border: 1px solid #ddd; padding: 0 10px 2px; text-align: left; }
  td { height: 46px; font-weight: 300; }
  th { height: 49px; background: #eee; border-bottom: 3px solid #ddd; font-weight: 500; }
`;
const Th = styled.th`width: ${(p) => p.$width};`;
const rows = [[5, "이승진"], [6, "홍은지"], [7, "노은하"], [8, "유상신"], [9, "임형"]];

/* ---------- right column ---------- */

const TaskTools = styled.div`
  display: flex;
  flex-direction: column;
  padding: 0 8px;
`;
const ToolRow = styled.div`
  display: flex;
  align-items: center;
  height: ${(p) => p.$height || 26}px;
  ${(p) => p.$line && "border-bottom: 1px solid #9a9a9a; margin-bottom: 5px;"}
`;
const FindRow = styled.div`
  display: flex;
  align-items: center;
  justify-content: space-between;
  padding: 1px 4px 0 6px;
`;
const FindBox = styled.label`
  display: flex;
  align-items: center;
  width: 63px;
  height: 25px;
  padding: 0 3px 0 8px;
  border: 1px solid #a5a5a5;
`;
const FindInput = styled.input`
  flex: 1;
  width: 30px;
  min-width: 0;
  &::placeholder { color: #555; opacity: 1; }
`;
const AllLink = styled.a`color: #1a5fc0; text-decoration: none;`;
const OutlineTools = styled.div`
  display: flex;
  align-items: center;
  justify-content: space-between;
  align-self: flex-end;
  width: 49px;
  height: 22px;
  margin: 2px 7px 0 0;
  background: #f4f5fb;
`;
const OutlineText = styled.p`margin: 0; padding: 0 3px;`;

/* ---------- console ---------- */

const ProcessLine = styled.div`
  flex: none;
  height: 23px;
  margin: 0 3px 1px 2px;
  padding: 2px 0 0;
  border-bottom: 1px solid #a0a0a0;
  white-space: nowrap;
  font-size: 15px;
`;
const ConsoleBody = styled.div`
  display: flex;
  flex: 1;
  min-height: 0;
  margin: 0 3px 0 2px;
`;
const Output = styled.pre`
  flex: 1;
  min-width: 0;
  margin: 0;
  padding: 1px 0 0;
  overflow: hidden;
  font: 15px/20px ${monoFont};
`;
const ErrText = styled.span`color: #f00;`;
const warning = "Thu Sep 20 20:04:23 KST 2018 WARN: Establishing SSL connection without server's identity verification is not recommended. According to MySQL 5.5.45+, 5.6.26+";

/* ---------- status bar and task bar ---------- */

const StatusBar = styled.footer`
  display: flex;
  align-items: center;
  flex: none;
  height: 27px;
  padding: 0 318px 4px 4px;
  justify-content: space-between;
`;
const TaskBar = styled.nav`
  display: flex;
  flex: none;
  height: 50px;
  background: linear-gradient(90deg, #2b1530, #1d1a2b 14%, #2a1027 25%, #261a20 33%, #2a1f27 77%, #1e1a2c 89%, #30152e);
  color: #fff;
`;
const TaskButton = styled.button`
  display: flex;
  align-items: center;
  justify-content: center;
  flex: none;
  width: ${(p) => (p.$start ? 59 : 62)}px;
  height: 50px;
  background: ${(p) => (p.$active ? "#544650" : "transparent")};
  ${(p) => p.$open && css`
    background-image: ${p.$stacked
      ? "linear-gradient(90deg, #ff80b8 80%, #b0608a 80%)"
      : "linear-gradient(#ff80b8, #ff80b8)"};
    background-size: ${p.$active ? "100%" : "51px"} 3px;
    background-position: 50% 100%;
    background-repeat: no-repeat;
  `}
`;
const Tray = styled.div`
  display: flex;
  align-items: center;
  margin-left: auto;
  padding-right: 5px;
`;
const TrayBtn = styled.button`
  display: flex;
  align-items: center;
  justify-content: center;
  width: ${(p) => p.$width || 30}px;
  height: 50px;
`;
const Clock = styled.div`width: 100px; text-align: center; line-height: 24px;`;
const Notify = styled(TrayBtn)`position: relative; border-right: 1px solid #7c7080; padding-right: 14px;`;
const Badge = styled.span`
  position: absolute;
  left: 21px;
  top: 24px;
  width: 20px;
  height: 20px;
  border: 1px solid #8d8a90;
  border-radius: 50%;
  background: #333036;
  line-height: 18px;
`;
const taskApps = [
  ["magnifier", 20], ["taskView", 20], ["edge", 28], ["explorer", 28, "stacked"], ["store", 28], ["ie", 30], ["mail", 30],
  ["driveSync", 28], ["switches", 28], ["ie", 30, "stacked"], ["spring", 30, "active"], ["paint", 30, "open"],
];

export default function App() {
  return (
    <Window>
      <GlobalStyle />
      <TitleBar>
        <Icon name="spring" size={21} />
        <Caption>sts-workspace - http://localhost:8080/A201632042/index.jsp - Spring Tool Suite</Caption>
        <WinBtn aria-label="Minimize"><Icon name="winMin" /></WinBtn>
        <WinBtn aria-label="Restore"><Icon name="winRestore" /></WinBtn>
        <WinBtn aria-label="Close"><Icon name="winClose" /></WinBtn>
      </TitleBar>
      <MenuBar>
        {["File", "Edit", "Navigate", "Search", "Project", "Run", "Window", "Help"].map((m) => <MenuItem key={m}>{m}</MenuItem>)}
      </MenuBar>
      <ToolBar>
        <Tools items={mainTools} />
        <Spacer />
        <QuickAccess aria-label="Quick Access" placeholder="Quick Access" />
        <Grip />
        <Perspectives><Tools items={["perspective", "/", "springPersp", "*javaPersp"]} /></Perspectives>
      </ToolBar>

      <Workbench>
        <Column $width={479}>
          <Panel>
            <PanelHead>
              <ViewTab icon="pkgExplorer">Package Explorer</ViewTab>
              <HeadTools>
                <Tools items={["collapse", "link", "/", "balls"]} />
                <ViewButtons menu apart />
              </HeadTools>
            </PanelHead>
            <PanelBody>
              <Tree>
                {files.map(([depth, state, icon, label, flag], i) => (
                  <TreeRow key={i} depth={depth} state={state} icon={icon} label={label} flag={flag} />
                ))}
              </Tree>
              <VTrack><Icon name="arrUp" /><VThumb $size={247} /><Icon name="arrDown" /></VTrack>
            </PanelBody>
          </Panel>
          <Panel $height={308}>
            <PanelHead>
              <ViewTab icon="power">Boot Dashboard</ViewTab>
              <HeadTools>
                <Tools items={["startGray", "debugGray", "stopGray", "globeGray", "monitorGray", "pencil", "props", "filter", "plus"]} />
                <ViewButtons menu apart />
              </HeadTools>
            </PanelHead>
            <BootBody>
              <FilterBox>
                <FilterInput aria-label="Filter" placeholder="Type tags, projects, or working set names to match (incl. * and ? wi" />
              </FilterBox>
              <Tree><TreeRow depth={0} state="r" icon="power" label="local" flag="bold" /></Tree>
            </BootBody>
          </Panel>
        </Column>

        <Column>
          <UpperRow>
            <EditorPanel>
              <EditorTabs>
                {editorTabs.map(([icon, label, width]) => (
                  <EditorTab key={label} $width={width}><Icon name={icon} />{label}</EditorTab>
                ))}
                <EditorTab $width={133} $active><Icon name="browser" />http://local...<Icon name="close" /></EditorTab>
                <MoreTabs>»<MoreCount>14</MoreCount></MoreTabs>
                <HeadTools><ViewButtons /></HeadTools>
              </EditorTabs>
              <BrowserBar>
                <Tools items={["back", "forward", "stop", "refreshGold", "v"]} />
                <UrlBox>
                  <UrlInput aria-label="Address" defaultValue="http://localhost:8080/A201632042/c201632042/list2?departmentId=4" />
                  <DropBtn aria-label="History"><Icon name="thinDown" /></DropBtn>
                </UrlBox>
                <RunBtn aria-label="Go"><Icon name="play" /></RunBtn>
                <Icon name="eclipse" size={22} />
              </BrowserBar>
              <WebPage>
                <Heading>교수목록</Heading>
                <Form onSubmit={(e) => e.preventDefault()}>
                  <Label htmlFor="departmentId">학과:</Label>
                  <TextBox id="departmentId" defaultValue="4" />
                  <Submit>조회</Submit>
                </Form>
                <Table>
                  <thead><tr><Th $width="13.5%">id</Th><Th $width="31.5%">교수이름</Th><Th>학과</Th></tr></thead>
                  <tbody>
                    {rows.map(([id, name]) => <tr key={id}><td>{id}</td><td>{name}</td><td>소프트웨어공학과</td></tr>)}
                  </tbody>
                </Table>
              </WebPage>
            </EditorPanel>

            <Column $width={142}>
              <Panel $height={146}>
                <PanelHead><ViewTab icon="tasks">Ta...</ViewTab><HeadTools><ViewButtons /></HeadTools></PanelHead>
                <TaskTools>
                  <ToolRow $line><Tools items={["newTask", "v", "/", "*categorized", "scheduled", "/", "ballsPurple"]} /></ToolRow>
                  <ToolRow $height={21}><Tools items={["unsub", "people", "collapse", "/", "syncRepo"]} /></ToolRow>
                  <ToolRow $height={29}><Tools items={["triangle"]} /></ToolRow>
                </TaskTools>
                <FindRow>
                  <FindBox><FindInput aria-label="Find" placeholder="Find" /><Icon name="search" /></FindBox>
                  <Icon name="playBlack" />
                  <AllLink href="#all">All</AllLink>
                  <Icon name="playBlack" />
                </FindRow>
              </Panel>
              <Panel $height={146}>
                <PanelHead><ViewTab icon="outline">Ou...</ViewTab><HeadTools><ViewButtons /></HeadTools></PanelHead>
                <OutlineTools><IconBtn aria-label="Focus"><Icon name="balls" /></IconBtn><MenuBtn aria-label="View menu"><Icon name="triangle" /></MenuBtn></OutlineTools>
                <OutlineText>An outline is not available.</OutlineText>
              </Panel>
              <Panel>
                <PanelHead><ViewTab icon="springExplorer">Sp...</ViewTab><HeadTools><ViewButtons /></HeadTools></PanelHead>
                <TaskTools>
                  <ToolRow><Tools items={["collapse", "link", "/", "balls", "/", "sortAz"]} /></ToolRow>
                  <ToolRow $height={23}><Tools items={["triangle"]} /></ToolRow>
                </TaskTools>
                <Tree>
                  <TreeRow depth={0} state="r" icon="proj" label="A201632042" />
                  <TreeRow depth={0} state="r" icon="proj" label="test2" />
                </Tree>
              </Panel>
            </Column>
          </UpperRow>

          <Panel $height={313}>
            <PanelHead>
              <ViewTab icon="problems" active={false} close={false}>Problems</ViewTab>
              <ViewTab active={false} close={false}><AtSign>@</AtSign>Javadoc</ViewTab>
              <ViewTab icon="declaration" active={false} close={false}>Declaration</ViewTab>
              <ViewTab icon="monitor">Console</ViewTab>
              <HeadTools>
                <Tools items={["refreshGray", "stop", "xGray", "xxGray", "/", "clearDoc", "lock", "wrap", "*showOut", "*showErr", "/", "pin", "monitor", "v", "newConsole", "v", "/", "grid", "anyEdit"]} />
                <ViewButtons />
              </HeadTools>
            </PanelHead>
            <ProcessLine>Pivotal tc Server Developer Edition v4.0 [Pivotal tc Server] C:₩Program Files₩Java₩jre1.8.0_181₩bin₩javaw.exe (2018. 9. 20. 오후 8:03:46)</ProcessLine>
            <ConsoleBody>
              <Output>
                {"2018-09-20 20:04:23.524  INFO 1108 --- [ tomcat-http--3] com.zaxxer.hikari.HikariDataSource       : HikariPool-1 - Start completed.\n"}
                <ErrText>{Array(9).fill(warning).join("\n")}</ErrText>
              </Output>
              <VTrack><Icon name="arrUp" /><VThumb $size={29} /><Icon name="arrDown" /></VTrack>
            </ConsoleBody>
            <HTrack><Icon name="arrLeft" /><HThumb /><Icon name="arrRight" /></HTrack>
          </Panel>
        </Column>
      </Workbench>

      <StatusBar><span>완료</span><Grip /></StatusBar>
      <TaskBar>
        <TaskButton $start aria-label="Start"><Icon name="windows" /></TaskButton>
        {taskApps.map(([name, size, state], i) => (
          <TaskButton key={i} aria-label={name} $open={!!state} $active={state === "active"} $stacked={state === "stacked"}>
            <Icon name={name} size={size} />
          </TaskButton>
        ))}
        <Tray>
          <TrayBtn $width={60} aria-label="People"><Icon name="peopleTray" /></TrayBtn>
          <TrayBtn aria-label="Show hidden icons"><Icon name="chevUpTray" /></TrayBtn>
          <TrayBtn aria-label="OneDrive"><Icon name="cloudTray" /></TrayBtn>
          <TrayBtn aria-label="Network"><Icon name="wifiTray" /></TrayBtn>
          <TrayBtn aria-label="Volume"><Icon name="speakerTray" /></TrayBtn>
          <TrayBtn aria-label="Status"><Icon name="xTray" /></TrayBtn>
          <TrayBtn $width={40} aria-label="Input method"><Icon name="ime" /></TrayBtn>
          <Clock>오후 8:04<br />2018-09-20</Clock>
          <Notify $width={56} aria-label="Notifications"><Icon name="notify" /><Badge>1</Badge></Notify>
        </Tray>
      </TaskBar>
    </Window>
  );
}
